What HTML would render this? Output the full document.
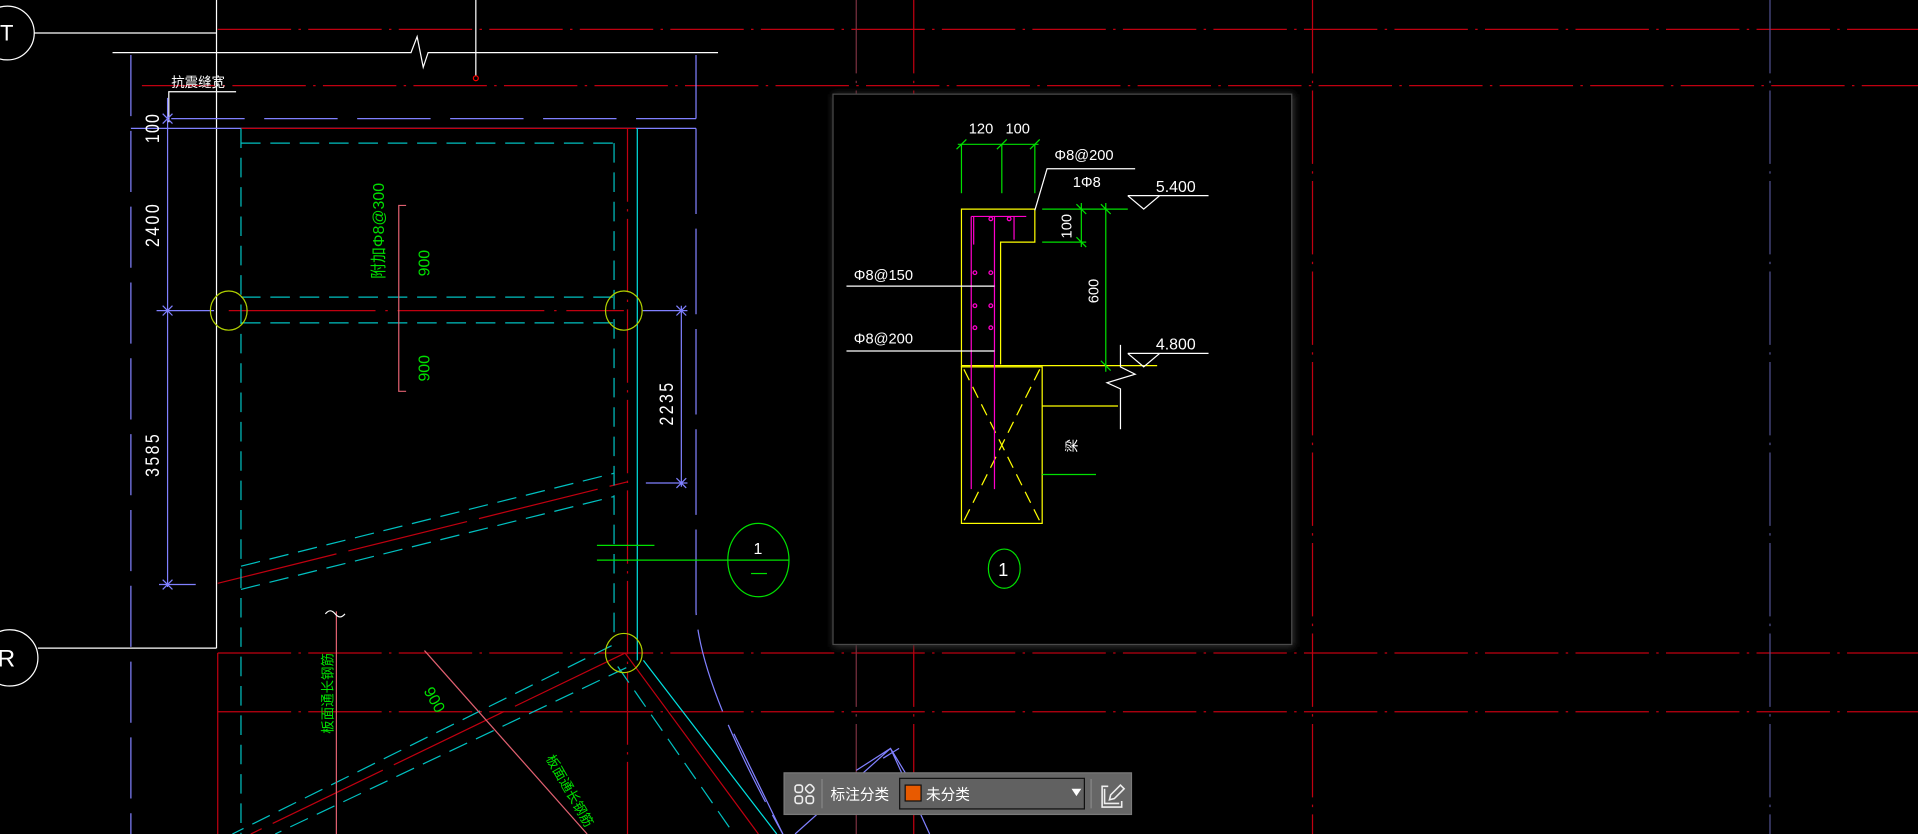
<!DOCTYPE html>
<html><head><meta charset="utf-8"><style>
html,body{margin:0;padding:0;background:#000;overflow:hidden}
svg{display:block}
text{font-family:"Liberation Sans","Noto Sans CJK SC",sans-serif}
</style></head><body>
<svg width="1918" height="834" viewBox="0 0 1568 682" preserveAspectRatio="none" xmlns="http://www.w3.org/2000/svg">
<rect width="1568" height="682" fill="#000"/>
<defs>
<filter id="sh" x="-10%" y="-10%" width="120%" height="120%"><feGaussianBlur stdDeviation="3"/></filter>
</defs>
<g fill="none" stroke-width="1">
<g stroke="#c00010" stroke-dasharray="60 6 2 6">
<line x1="178" y1="24" x2="1568" y2="24"/>
<line x1="116" y1="70" x2="1568" y2="70"/>
<line x1="178" y1="534" x2="1568" y2="534"/>
<line x1="178" y1="582" x2="1568" y2="582"/>
<line x1="747" y1="0" x2="747" y2="682"/>
<line x1="1073" y1="0" x2="1073" y2="682"/>
<line x1="513" y1="105" x2="513" y2="682"/>
</g>
<line x1="700" y1="0" x2="700" y2="682" stroke="#7a3040" stroke-dasharray="60 6 2 6"/>
<line x1="1447" y1="0" x2="1447" y2="682" stroke="#505090" stroke-dasharray="60 6 2 6"/>
<line x1="178" y1="534" x2="178" y2="682" stroke="#c00010"/>
<g stroke="#fff">
<circle cx="6" cy="27" r="22"/>
<line x1="28" y1="27" x2="177" y2="27"/>
<circle cx="8" cy="538" r="23"/>
<line x1="31" y1="530" x2="177" y2="530"/>
<line x1="177" y1="0" x2="177" y2="530"/>
<line x1="389" y1="0" x2="389" y2="62"/>
<polyline points="92,43 336,43 341,30 346,55 350,43 587,43"/>
<polyline points="138,100 138,75 193,75"/>
</g>
<circle cx="389" cy="64" r="2" stroke="#f00"/>
<g stroke="#8080ff">
<line x1="107" y1="45" x2="107" y2="682" stroke-dasharray="50 12"/>
<line x1="569" y1="45" x2="569" y2="97"/>
<line x1="140" y1="97" x2="569" y2="97" stroke-dasharray="60 16"/>
<line x1="107" y1="105" x2="569" y2="105"/>
<line x1="137" y1="80" x2="137" y2="480"/>
<line x1="128" y1="254" x2="175" y2="254"/>
<line x1="525" y1="254" x2="562" y2="254"/>
<line x1="557" y1="250" x2="557" y2="398"/>
<line x1="528" y1="395" x2="562" y2="395"/>
<line x1="130" y1="478" x2="160" y2="478"/>
<path d="M569 105 L569 500 Q572 560 640 682" stroke-dasharray="70 12"/>
<path d="M700 630 L728 612 L745 640 M722 620 L735 612 M650 682 L728 612 M728 612 L760 682"/>
<path d="M600 600 L640 682"/>
</g>
<g stroke="#8080ff"><path d="M133 93l8 8M133 101l8-8M133 250l8 8M133 258l8-8M133 474l8 8M133 482l8-8M553 250l8 8M553 258l8-8M553 391l8 8M553 399l8-8"/></g>
<g stroke="#c00010">
<line x1="197" y1="105" x2="520" y2="105"/>
<line x1="187" y1="254" x2="510" y2="254" stroke-dasharray="120 8 2 8"/>
<line x1="178" y1="477" x2="513" y2="394" stroke-dasharray="100 10"/>
<line x1="511" y1="534" x2="205" y2="682" stroke-dasharray="100 10"/>
<line x1="511" y1="534" x2="620" y2="682"/>
</g>
<g stroke="#00c0c0">
<line x1="197" y1="105" x2="197" y2="682" stroke-dasharray="16 8"/>
<line x1="502" y1="117" x2="502" y2="520" stroke-dasharray="16 8"/>
<line x1="197" y1="117" x2="502" y2="117" stroke-dasharray="16 8"/>
<line x1="197" y1="243" x2="502" y2="243" stroke-dasharray="16 8"/>
<line x1="197" y1="264" x2="502" y2="264" stroke-dasharray="16 8"/>
<line x1="197" y1="463" x2="502" y2="387" stroke-dasharray="16 8"/>
<line x1="197" y1="482" x2="502" y2="406" stroke-dasharray="16 8"/>
<line x1="500" y1="528" x2="190" y2="682" stroke-dasharray="16 8"/>
<line x1="512" y1="546" x2="225" y2="682" stroke-dasharray="16 8"/>
<line x1="505" y1="545" x2="600" y2="682" stroke-dasharray="16 8"/>
</g>
<line x1="521" y1="105" x2="521" y2="540" stroke="#00e0e0"/>
<line x1="526" y1="540" x2="635" y2="682" stroke="#00e0e0"/>
<g stroke="#b0d000">
<ellipse cx="187" cy="254" rx="15" ry="16"/>
<ellipse cx="510" cy="254" rx="15" ry="16"/>
<ellipse cx="510" cy="534" rx="15" ry="16"/>
</g>
<g stroke="#e06070">
<polyline points="332,168 326,168 326,320 332,320"/>
<line x1="275" y1="500" x2="275" y2="682"/>
<line x1="347" y1="532" x2="480" y2="682"/>
</g>
<path d="M266 502q4-5 8 0t8 0" stroke="#fff"/>
<g stroke="#00e000">
<ellipse cx="620" cy="458" rx="25" ry="30"/>
<line x1="488" y1="458" x2="645" y2="458"/>
<line x1="488" y1="446" x2="535" y2="446"/>
<line x1="614" y1="469" x2="627" y2="469"/>
</g>
<rect x="681" y="77" width="377" height="452" fill="#333" filter="url(#sh)"/>
<rect x="681" y="77" width="375" height="450" fill="#000" stroke="#4a4a4a"/>
<g stroke="#ffff00">
<polyline points="818,298 818,198 846,198 846,171 786,171 786,300"/>
<rect x="786" y="300" width="66" height="128"/>
<path d="M788 302 L850 426 M850 302 L788 426" stroke-dasharray="10 6"/>
<line x1="786" y1="299" x2="946" y2="299"/>
<line x1="852" y1="332" x2="914" y2="332"/>
</g>
<g stroke="#ff00cc">
<line x1="794" y1="177" x2="794" y2="400"/>
<line x1="813" y1="177" x2="813" y2="400"/>
<line x1="794" y1="177" x2="839" y2="177"/>
<line x1="796" y1="177" x2="796" y2="200"/>
<line x1="829" y1="177" x2="829" y2="196"/>
<circle cx="825" cy="179" r="1.5"/><circle cx="810" cy="179" r="1.5"/>
<circle cx="797" cy="223" r="1.5"/><circle cx="810" cy="223" r="1.5"/>
<circle cx="797" cy="268" r="1.5"/><circle cx="810" cy="268" r="1.5"/>
<circle cx="797" cy="250" r="1.5"/><circle cx="810" cy="250" r="1.5"/>
</g>
<g stroke="#00e000">
<line x1="783" y1="118" x2="849" y2="118"/>
<line x1="786" y1="118" x2="786" y2="158"/>
<line x1="819" y1="118" x2="819" y2="158"/>
<line x1="846" y1="118" x2="846" y2="158"/>
<path d="M782 122l8-8M815 122l8-8M842 122l8-8"/>
<line x1="852" y1="171" x2="922" y2="171"/>
<line x1="852" y1="198" x2="888" y2="198"/>
<line x1="884" y1="166" x2="884" y2="202"/>
<line x1="904" y1="166" x2="904" y2="304"/>
<path d="M880 167l8 8M880 194l8 8M900 167l8 8M900 295l8 8"/>
<line x1="852" y1="388" x2="896" y2="388"/>
<ellipse cx="821" cy="465" rx="13" ry="16"/>
</g>
<g stroke="#fff">
<polyline points="846,172 856,138 928,138"/>
<line x1="692" y1="234" x2="813" y2="234"/>
<line x1="692" y1="287" x2="813" y2="287"/>
<polyline points="922,160 988,160"/><path d="M922 160l13 11 13-11"/>
<polyline points="922,289 988,289"/><path d="M922 289l13 11 13-11"/>
<polyline points="916,282 916,300 928,306 905,313 916,318 916,351"/>
</g>
</g>
<g fill="#fff" font-size="13">
<text x="140" y="71" font-size="11">抗震缝宽</text>
<text transform="translate(130,117) rotate(-90) scale(1,1.2)" font-size="13" letter-spacing="1">100</text>
<text transform="translate(130,202) rotate(-90) scale(1,1.2)" letter-spacing="2">2400</text>
<text transform="translate(130,390) rotate(-90) scale(1,1.2)" letter-spacing="2">3585</text>
<text transform="translate(550,348) rotate(-90) scale(1,1.2)" letter-spacing="2">2235</text>
<text x="792" y="109" font-size="12">120</text>
<text x="822" y="109" font-size="12">100</text>
<text x="862" y="131" font-size="12">Φ8@200</text>
<text x="877" y="153" font-size="12">1Φ8</text>
<text x="945" y="157" font-size="13">5.400</text>
<text x="945" y="286" font-size="13">4.800</text>
<text x="698" y="229" font-size="12">Φ8@150</text>
<text x="698" y="281" font-size="12">Φ8@200</text>
<text transform="translate(876,195) rotate(-90)" font-size="12">100</text>
<text transform="translate(898,248) rotate(-90)" font-size="12">600</text>
<text transform="translate(880,370) rotate(-90)" font-size="11">梁</text>
<text x="616" y="453" font-size="13">1</text>
<text x="816" y="471" font-size="15">1</text>
<text x="0" y="33" font-size="18">T</text>
<text x="-2" y="545" font-size="20">R</text>
</g>
<g fill="#00e000" font-size="13">
<text transform="translate(314,228) rotate(-90)">附加Φ8@300</text>
<text transform="translate(351,226) rotate(-90)">900</text>
<text transform="translate(351,312) rotate(-90)">900</text>
<text transform="translate(272,600) rotate(-90)" font-size="11">板面通长钢筋</text>
<text transform="translate(346,565) rotate(60)">900</text>
<text transform="translate(446,620) rotate(60)" font-size="11">板面通长钢筋</text>
</g>
<rect x="641" y="632" width="284" height="34" fill="#666" stroke="#7a7a7a"/>
<g fill="none" stroke="#eee" stroke-width="1.3">
<rect x="650" y="642" width="6" height="6" rx="2"/>
<rect x="650" y="651" width="6" height="6" rx="2"/>
<rect x="659" y="651" width="6" height="6" rx="2"/>
<rect x="659" y="642" width="6" height="6" rx="2" transform="rotate(45 662 645)"/>
</g>
<line x1="672" y1="637" x2="672" y2="661" stroke="#888"/>
<text x="679" y="654" fill="#fff" font-size="12">标注分类</text>
<rect x="735.5" y="636.5" width="151" height="25" fill="#616161" stroke="#111"/>
<rect x="740" y="642" width="13" height="13" fill="#e85a00" stroke="#111"/>
<text x="757" y="654" fill="#fff" font-size="12">未分类</text>
<path d="M876 645h8l-4 6z" fill="#fff"/>
<line x1="892" y1="637" x2="892" y2="661" stroke="#888"/>
<g fill="none" stroke="#eee" stroke-width="1.3">
<path d="M906 643h-5v17h16v-5"/>
<path d="M903 645v12h12"/>
<path d="M907 654l1-4 8-8 3 3-8 8z"/>
</g>
</svg>
</body></html>
